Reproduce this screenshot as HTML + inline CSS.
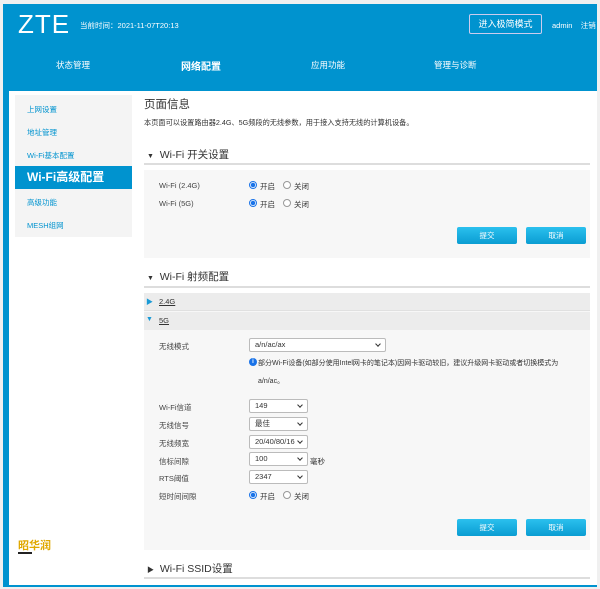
<!DOCTYPE html><html><head><meta charset="utf-8"><style>
*{margin:0;padding:0;box-sizing:border-box}
body{width:600px;height:589px;overflow:hidden;background:#f0f0f0;font-family:"Liberation Sans","Noto Sans CJK SC",sans-serif;position:relative;font-size:8px;color:#333}
.a{position:absolute;white-space:nowrap}
.frame{position:absolute;left:3px;top:4px;width:594px;height:583px;background:#0093cf}
.content{position:absolute;left:9px;top:91px;width:588px;height:494px;background:#fff}
.side{position:absolute;left:15px;top:95px;width:117px;height:142px;background:#f4f4f4}
.si{position:absolute;left:27px;color:#0093cf;font-size:7.5px}
.panel{position:absolute;left:144px;background:#f7f7f7;width:446px}
.btn{position:absolute;width:60px;height:17px;background:linear-gradient(#2bc0ee,#0a9dd2);border-radius:2px;color:#fff;font-size:7.5px;text-align:center;line-height:17px}
.h{position:absolute;left:147px;font-size:10.5px;color:#333}
.line{position:absolute;left:144px;width:446px;height:2px;background:#ddd}
.lbl{position:absolute;left:159px;font-size:7.5px;color:#444}
.sel{position:absolute;left:249px;height:14px;border:1px solid #bbb;background:#fff;border-radius:2px;font-size:7.5px;padding-left:5px;line-height:12px}
.sel:after{content:"";position:absolute;right:5px;top:3px;width:3px;height:3px;border-right:1px solid #333;border-bottom:1px solid #333;transform:rotate(45deg)}
.r{position:absolute;width:8px;height:8px;border-radius:50%;border:1px solid #999;background:#fff}
.r.on{border-color:#1a73e8;background:radial-gradient(#1a73e8 2px,#fff 2.5px)}
</style></head><body>
<div class="frame"></div>
<div class="a" style="left:18px;top:9px;font-size:26px;color:#fff;letter-spacing:1px">ZTE</div>
<div class="a" style="left:80px;top:20px;font-size:7.5px;color:#fff">当前时间：2021-11-07T20:13</div>
<div class="a" style="left:469px;top:14px;width:73px;height:20px;border:1px solid #cce;border-radius:2px;color:#fff;font-size:9px;text-align:center;line-height:18px">进入极简模式</div>
<div class="a" style="left:552px;top:20px;font-size:7.5px;color:#fff">admin&nbsp;&nbsp;&nbsp;&nbsp;注销</div>
<div class="a" style="left:56px;top:59px;font-size:8.5px;color:#fff">状态管理</div>
<div class="a" style="left:181px;top:58px;font-size:10px;color:#fff;font-weight:bold">网络配置</div>
<div class="a" style="left:311px;top:59px;font-size:8.5px;color:#fff">应用功能</div>
<div class="a" style="left:434px;top:59px;font-size:8.5px;color:#fff">管理与诊断</div>
<div class="content"></div>
<div class="side"></div>
<div class="si" style="top:104px">上网设置</div>
<div class="si" style="top:127px">地址管理</div>
<div class="si" style="top:150px">Wi-Fi基本配置</div>
<div class="a" style="left:15px;top:166px;width:117px;height:23px;background:#0093cf;color:#fff;font-size:12px;font-weight:bold;padding-left:12px;line-height:23px">Wi-Fi高级配置</div>
<div class="si" style="top:197px">高级功能</div>
<div class="si" style="top:220px">MESH组网</div>
<div class="a" style="left:18px;top:537px;font-size:11px;color:#e0a800;font-weight:bold">昭华润</div>
<div class="a" style="left:18px;top:552px;width:14px;height:2px;background:#222"></div>
<div class="a" style="left:144px;top:96px;font-size:11.5px;color:#333">页面信息</div>
<div class="a" style="left:144px;top:118px;font-size:7.2px;color:#333">本页面可以设置路由器2.4G、5G频段的无线参数，用于接入支持无线的计算机设备。</div>
<div class="h" style="top:147px"><span style="font-size:7px">▼</span>&nbsp;&nbsp;Wi-Fi 开关设置</div>
<div class="line" style="top:163px"></div>
<div class="panel" style="top:170px;height:88px"></div>
<div class="lbl" style="top:181px">Wi-Fi (2.4G)</div>
<div class="lbl" style="top:199px">Wi-Fi (5G)</div>
<div class="r on" style="left:249px;top:181px"></div><div class="a" style="left:260px;top:181px;font-size:7.5px">开启</div>
<div class="r" style="left:283px;top:181px"></div><div class="a" style="left:294px;top:181px;font-size:7.5px">关闭</div>
<div class="r on" style="left:249px;top:199px"></div><div class="a" style="left:260px;top:199px;font-size:7.5px">开启</div>
<div class="r" style="left:283px;top:199px"></div><div class="a" style="left:294px;top:199px;font-size:7.5px">关闭</div>
<div class="btn" style="left:457px;top:227px">提交</div>
<div class="btn" style="left:526px;top:227px">取消</div>
<div class="h" style="top:269px"><span style="font-size:7px">▼</span>&nbsp;&nbsp;Wi-Fi 射频配置</div>
<div class="line" style="top:286px"></div>
<div class="panel" style="top:293px;height:257px"></div>
<div class="a" style="left:144px;top:293px;width:446px;height:18px;background:#ececec;border-bottom:1px solid #e0e0e0"></div>
<div class="a" style="left:144px;top:312px;width:446px;height:18px;background:#ececec"></div>
<div class="a" style="left:146px;top:297px;font-size:7px;color:#1a9ad6">▶</div>
<div class="a" style="left:159px;top:297px;font-size:7.5px;text-decoration:underline">2.4G</div>
<div class="a" style="left:146px;top:316px;font-size:7px;color:#1a9ad6">▼</div>
<div class="a" style="left:159px;top:316px;font-size:7.5px;text-decoration:underline">5G</div>
<div class="lbl" style="top:341px">无线模式</div>
<div class="sel" style="top:338px;width:137px">a/n/ac/ax</div>
<div class="a" style="left:249px;top:358px;width:8px;height:8px;border-radius:50%;background:#1a73e8;color:#fff;font-size:6px;text-align:center;line-height:8px;font-weight:bold">i</div>
<div class="a" style="left:258px;top:358px;font-size:7px">部分Wi-Fi设备(如部分使用Intel网卡的笔记本)因网卡驱动较旧，建议升级网卡驱动或者切换模式为</div>
<div class="a" style="left:258px;top:376px;font-size:7px">a/n/ac。</div>
<div class="lbl" style="top:402px">Wi-Fi信道</div><div class="sel" style="top:399px;width:59px">149</div>
<div class="lbl" style="top:420px">无线信号</div><div class="sel" style="top:417px;width:59px">最佳</div>
<div class="lbl" style="top:438px">无线频宽</div><div class="sel" style="top:435px;width:59px">20/40/80/16</div>
<div class="lbl" style="top:456px">信标间隙</div><div class="sel" style="top:452px;width:59px">100</div><div class="a" style="left:310px;top:456px;font-size:7.5px">毫秒</div>
<div class="lbl" style="top:473px">RTS阈值</div><div class="sel" style="top:470px;width:59px">2347</div>
<div class="lbl" style="top:491px">短时间间隙</div>
<div class="r on" style="left:249px;top:491px"></div><div class="a" style="left:260px;top:491px;font-size:7.5px">开启</div>
<div class="r" style="left:283px;top:491px"></div><div class="a" style="left:294px;top:491px;font-size:7.5px">关闭</div>
<div class="btn" style="left:457px;top:519px">提交</div>
<div class="btn" style="left:526px;top:519px">取消</div>
<div class="h" style="top:561px"><span style="font-size:7px">▶</span>&nbsp;&nbsp;Wi-Fi SSID设置</div>
<div class="line" style="top:577px"></div>
</body></html>
